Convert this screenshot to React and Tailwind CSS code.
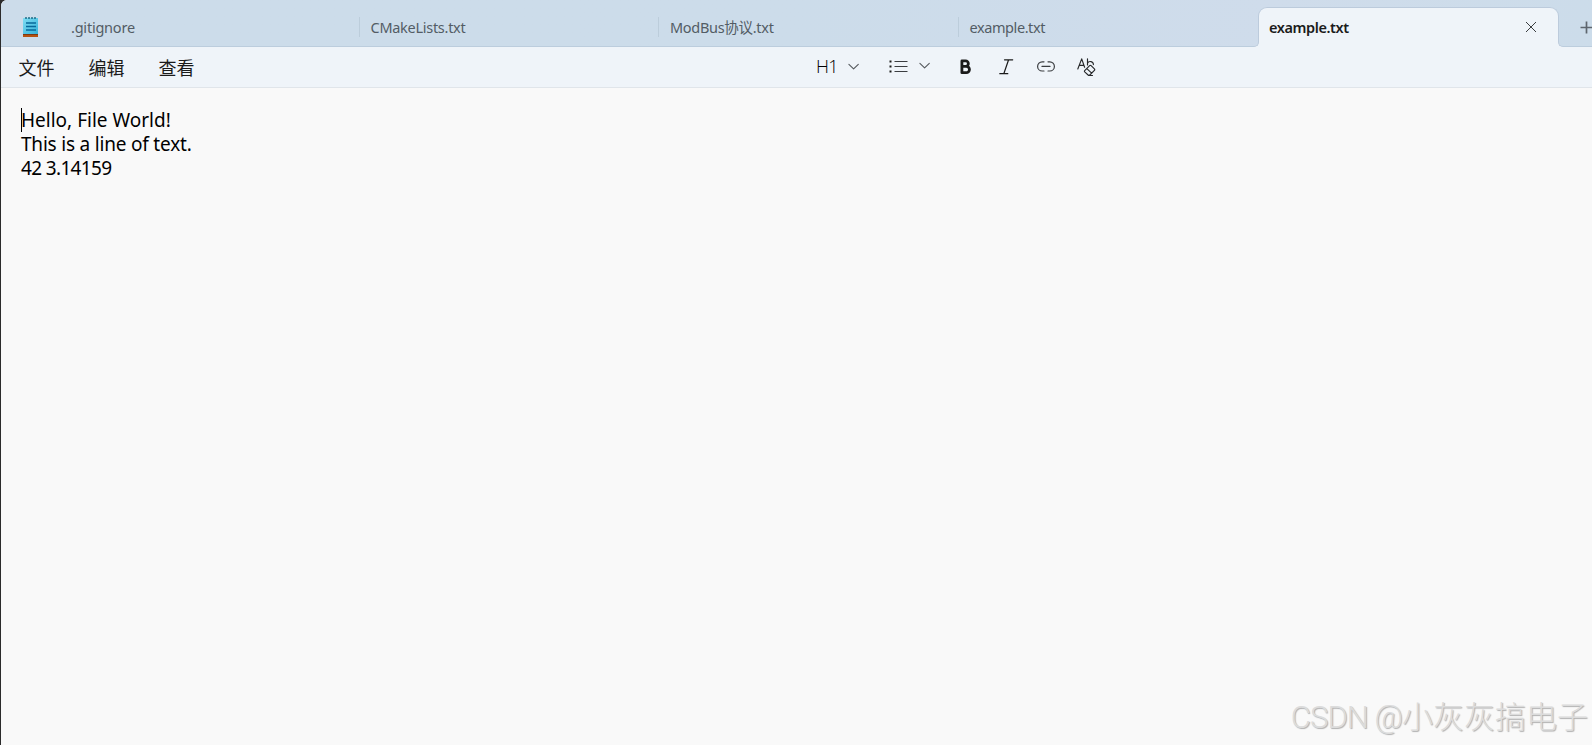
const tabs = [
  { name: ".gitignore", tracking: "tracking-[-0.22px]" },
  { name: "CMakeLists.txt", tracking: "tracking-[-0.28px]" },
  { name: "ModBus协议.txt", tracking: "tracking-[-0.3px]" },
  { name: "example.txt", tracking: "tracking-[-0.42px]" }
];

const menus = ["文件", "编辑", "查看"];

function NotepadIcon() {
  return (
    <svg width="15" height="21" viewBox="0 0 15 21" className="shrink-0">
      <defs>
        <linearGradient id="pad" x1="0" y1="0" x2="1" y2="1">
          <stop offset="0" stopColor="#7fdcf2" />
          <stop offset="1" stopColor="#35b3da" />
        </linearGradient>
      </defs>
      <rect x="0" y="17" width="15" height="3" fill="#b5510f" />
      <rect x="0" y="17" width="15" height="1" fill="#7c3a14" />
      <rect x="0" y="1" width="15" height="16" fill="url(#pad)" />
      <path d="M3 0v2M6 0v2M9 0v2M12 0v2" stroke="#14657f" strokeWidth="1.4" />
      <path d="M3 6h10M3 9.5h10M3 13h10" stroke="#08699a" strokeWidth="1.7" />
    </svg>
  );
}

function Chevron() {
  return (
    <svg width="12" height="8" viewBox="0 0 12 8" fill="none" stroke="#55595d" strokeWidth="1.1" strokeLinecap="round" strokeLinejoin="round">
      <path d="M.9 1.3l4.7 4.6 4.7-4.6" />
    </svg>
  );
}

function ListIcon() {
  return (
    <svg width="19" height="13" viewBox="0 0 19 13">
      <path d="M5.5 1.5h13M5.5 6.5h13M5.5 11.5h13" stroke="#3a3d40" strokeWidth="1.1" />
      <path d="M.5 1.5h2M.5 6.5h2M.5 11.5h2" stroke="#1b1b1b" strokeWidth="2" />
    </svg>
  );
}

function BoldIcon() {
  return (
    <svg width="12" height="16" viewBox="0 0 12 16" fill="none" stroke="#1b1b1b" strokeWidth="2.8" strokeLinejoin="round">
      <path d="M1.9 1.9h3.7a2.7 2.7 0 0 1 0 5.5H1.9zM1.9 7.4h4.4a3.1 3.1 0 0 1 0 6.3H1.9z" />
    </svg>
  );
}

function ItalicIcon() {
  return (
    <svg width="15" height="16" viewBox="0 0 15 16" fill="none" stroke="#1b1b1b" strokeWidth="1.2" strokeLinecap="round">
      <path d="M5.5 .8h8.2M.8 14.7h8M9.6 .8L4.8 14.7" />
    </svg>
  );
}

function LinkIcon() {
  return (
    <svg width="18" height="11" viewBox="0 0 18 11" fill="none" stroke="#3a3d40" strokeWidth="1.2" strokeLinecap="round">
      <path d="M7 .8H5.2a4.6 4.6 0 0 0 0 9.2H7M11 .8h1.8a4.6 4.6 0 0 1 0 9.2H11M5 5.4h8" />
    </svg>
  );
}

function ClearFormatIcon() {
  return (
    <svg width="19" height="19" viewBox="0 0 19 19" fill="none" stroke="#26282a" strokeWidth="1.15" strokeLinecap="round" strokeLinejoin="round">
      <path d="M.8 11L4.7.9l2.9 8.3M2.2 7.4h4.6" />
      <path d="M10.5.7v6.2M10.5 5.3c.8-1.6 2.2-2 3.5-1.7 1.6.4 2.4 1.7 2.4 3" />
      <path d="M7.7 12.7l4.9-5c.5-.5 1-.5 1.5 0l3.3 3.2c.5.5.5 1 0 1.5l-4.6 4.6c-.5.5-1.2.5-1.7 0l-3.4-3.1c-.4-.4-.4-.8 0-1.2zM9.8 10.6l4.9 4.6M11.9 17.5h3.6" />
    </svg>
  );
}

function ActiveTab() {
  return (
    <div className="relative -mt-px -mb-px flex w-[301px] shrink-0 items-center justify-between rounded-t-[9px] border border-b-0 border-[#bccbdc] bg-[#eff4f9] pr-[21px] pl-[10px]">
      <span className="text-[14.5px] font-semibold tracking-[-0.42px] text-[#1b1b1b]">example.txt</span>
      <svg width="12" height="12" viewBox="0 0 12 12" stroke="#3a3d40" strokeWidth="1" className="mb-[2px]">
        <path d="M1 1l10 10M11 1L1 11" />
      </svg>
      {/* flared feet where the tab meets the toolbar */}
      <span className="absolute bottom-0 -left-[5px] h-[5px] w-[5px] bg-[#eff4f9]">
        <span className="block h-[5px] w-[5px] rounded-br-[5px] border-r border-b border-[#bccbdc] bg-[#cfdceb]" />
      </span>
      <span className="absolute -right-[5px] bottom-0 h-[5px] w-[5px] bg-[#eff4f9]">
        <span className="block h-[5px] w-[5px] rounded-bl-[5px] border-b border-l border-[#bccbdc] bg-[#ccdcea]" />
      </span>
    </div>
  );
}

export default function App() {
  return (
    <div className="h-[745px] w-[1592px] overflow-hidden bg-[#2b2b2b] pl-px font-['Noto_Sans','Noto_Sans_CJK_SC',sans-serif]">
      <div className="flex h-full flex-col overflow-hidden rounded-tl-[6px] bg-[#f9f9f9]">
        <header className="flex h-[47px] shrink-0 border-b border-[#bccddd] bg-linear-to-r from-[#ccdcea] from-50% via-[#cfdceb] via-80% to-[#ccdcea] pt-[8px]">
          <div className="flex w-[59px] shrink-0 items-start pt-[9px] pl-[22px]">
            <NotepadIcon />
          </div>
          {tabs.map(({ name, tracking }, i) => (
            <div key={name} className="flex w-[299.5px] shrink-0 items-center pl-[11px]">
              <span className={`flex-1 pt-[2px] text-[14.5px] text-[#535c65] ${tracking}`}>{name}</span>
              {i < tabs.length - 1 && <span className="h-[20px] w-px bg-[#bccddb]" />}
            </div>
          ))}
          <ActiveTab />
          <div className="flex flex-1 items-center overflow-hidden pt-px pl-[21px]">
            <svg width="13" height="13" viewBox="0 0 13 13" stroke="#5e666e" strokeWidth="1.7" className="shrink-0">
              <path d="M.5 6.5h12M6.5.5v12" />
            </svg>
          </div>
        </header>

        <div className="flex h-[41px] shrink-0 items-center border-b border-[#e0e5ea] bg-[#eff4f9]">
          <nav className="flex w-[816px] gap-[34px] pl-[17.5px]">
            {menus.map((m) => (
              <span key={m} className="font-['Noto_Sans_CJK_SC',sans-serif] text-[18px] leading-6 text-[#1b1b1b]">
                {m}
              </span>
            ))}
          </nav>
          <div className="flex items-center">
            <span className="-ml-px w-[32px] pb-[2px] font-['Open_Sans',sans-serif] text-[18px] leading-5 font-light tracking-[-0.8px] text-black">H1</span>
            <Chevron />
            <span className="ml-[29px] flex items-center gap-[11px] pb-[2px]">
              <ListIcon />
              <Chevron />
            </span>
            <span className="ml-[29px] flex items-center gap-[27px]">
              <BoldIcon />
              <ItalicIcon />
            </span>
            <span className="ml-[23px] flex items-center gap-[22px]">
              <span className="pb-px">
                <LinkIcon />
              </span>
              <ClearFormatIcon />
            </span>
          </div>
        </div>

        <main className="flex flex-1 flex-col justify-between">
          <div className="relative pt-[20px] pl-[20px] text-[19px] leading-6 whitespace-pre text-black">
            <span className="absolute top-[20px] left-[20px] h-[24px] w-px bg-black" />
            <p>Hello, File World!</p>
            <p className="tracking-[-0.2px]">This is a line of text.</p>
            <p className="tracking-[-0.65px]">42 3.14159</p>
          </div>
          <p className="pr-[4px] pb-[8px] text-right font-['Roboto','Noto_Sans_CJK_SC',sans-serif] text-[31px] leading-[38px] font-light text-[#dcdcdc] [text-shadow:1px_1px_1px_#b0b0b0]">
            <span className="tracking-[-0.9px]">CSDN @</span>
            <span>小灰灰搞电子</span>
          </p>
        </main>
      </div>
    </div>
  );
}
